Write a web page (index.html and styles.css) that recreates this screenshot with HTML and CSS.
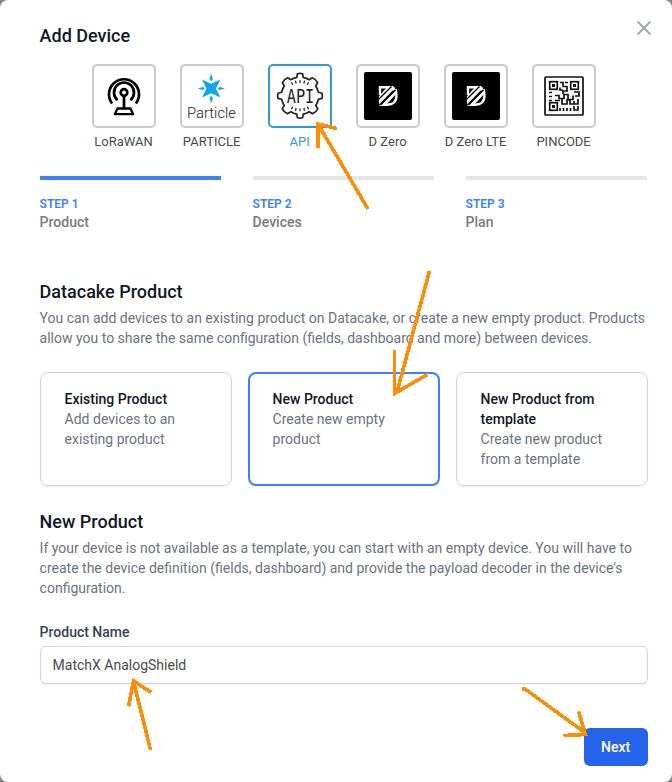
FILE: index.html
```
<!DOCTYPE html>
<html lang="en">
<head>
<meta charset="utf-8">
<title>Add Device</title>
<link rel="stylesheet" href="styles.css">
</head>
<body>
<main class="modal">
  <header class="modal-header">
    <h1>Add Device</h1>
    <button class="close" aria-label="Close"><svg width="24" height="24" viewBox="0 0 24 24"><path d="M5.500 5.500l13 13M18.500 5.500l-13 13" fill="none" stroke="#9ca3af" stroke-width="1.800"/></svg></button>
  </header>

  <nav class="types">
    <div class="type">
      <div class="tile"><svg viewBox="0 0 64 64" fill="none" stroke="#000" stroke-width="2.700">
        <path d="M20.200 39.500A15 15 0 1 1 43.800 39.500"/>
        <path d="M25.600 36.200A10 10 0 1 1 38.400 36.200"/>
        <circle cx="32" cy="28.500" r="3.300"/><path d="M32 32V44"/>
        <path d="M25.500 44.500h13l2.600 5.700H22.900z" stroke-linejoin="round" stroke-width="2.300"/>
      </svg></div><span>LoRaWAN</span>
    </div>
    <div class="type">
      <div class="tile"><svg viewBox="0 0 64 64">
        <g fill="#12a7e8"><path d="M22 15.500L31.200 19.800 40.400 15.500 36 24.500 40.400 33.400 31.200 29.300 22 33.400 26.400 24.500z"/>
        <path d="M31.200 9.500l1.700 5.500-1.700 2.500-1.700-2.500zM31.200 39.500l1.700-5.500-1.700-2.500-1.700 2.500zM17.500 24.500l5.500-1.500 1.800 1.500-1.800 1.500zM45 24.500l-5.500-1.500-1.800 1.500 1.800 1.500z"/></g>
        <text class="particle-word" x="7" y="53.500" textLength="49" lengthAdjust="spacingAndGlyphs">Particle</text>
      </svg></div><span>PARTICLE</span>
    </div>
    <div class="type selected">
      <div class="tile"><svg viewBox="0 0 64 64" fill="none" stroke="#222" stroke-width="1.700" stroke-linejoin="round">
        <path d="M28.800 13.300L29.400 9.800Q32 9 34.600 9.800L35.200 13.300Q38.500 14 41.200 15.700L44.300 13.800Q47.500 14.900 49.600 18.600L47.800 22Q49.700 25 50.300 28.200L54 29.200Q54.800 31.800 54 34.400L50.300 35.300Q49.600 38.700 47.800 41.500L49.800 44.700Q48.500 48 44.500 49.800L41.200 47.800Q38.500 49.500 35.200 50.200L34.600 53.700Q32 54.500 29.400 53.700L28.800 50.200Q25.500 49.500 22.800 47.800L19.500 49.800Q15.700 48.200 14.200 44.700L16.200 41.500Q14.400 38.700 13.700 35.300L10 34.400Q9.200 31.800 10 29.200L13.700 28.200Q14.300 25 16.200 22L14.400 18.600Q16.300 15.200 19.700 13.800L22.800 15.700Q25.500 14 28.800 13.300z"/>
        <path d="M23.500 18.200l1.200 2.600M27.500 16.700l.6 2.800M32 16.200v2.800M36.500 16.700l-.6 2.800M40.500 18.200l-1.200 2.600M23.500 45.300l1.200-2.600M27.500 46.800l.6-2.800M32 47.300v-2.800M36.500 46.800l-.6-2.800M40.500 45.300l-1.200-2.600" stroke-width="1.300"/>
        <text class="api-word" x="18.800" y="39" textLength="27.500" lengthAdjust="spacingAndGlyphs">API</text>
      </svg></div><span>API</span>
    </div>
    <div class="type">
      <div class="tile"><svg viewBox="0 0 64 64">
        <rect x="8" y="8" width="48" height="48" rx="2"/>
        <path d="M24 31V23.200H31Q40.500 23.500 40.500 32T31 40.800H25.500" fill="none" stroke="#fff" stroke-width="2.400"/>
        <path d="M22.800 32.500L32 22h5l2 2-16 16.500zM23 42l17.500-17.500 1 4L29 42z" fill="#fff"/>
        <path d="M21.500 36.500L35.500 22.500M24.500 41L39.500 26" stroke="#000" stroke-width="1.400"/>
      </svg></div><span>D Zero</span>
    </div>
    <div class="type">
      <div class="tile"><svg viewBox="0 0 64 64">
        <rect x="8" y="8" width="48" height="48" rx="2"/>
        <path d="M24 31V23.200H31Q40.500 23.500 40.500 32T31 40.800H25.500" fill="none" stroke="#fff" stroke-width="2.400"/>
        <path d="M22.800 32.500L32 22h5l2 2-16 16.500zM23 42l17.500-17.500 1 4L29 42z" fill="#fff"/>
        <path d="M21.500 36.500L35.500 22.500M24.500 41L39.500 26" stroke="#000" stroke-width="1.400"/>
      </svg></div><span>D Zero LTE</span>
    </div>
    <div class="type">
      <div class="tile"><svg viewBox="0 0 64 64" fill="none" stroke="#111" stroke-width="1.700">
        <rect x="13" y="13" width="38" height="38" rx=".8"/>
        <rect x="17.700" y="17.700" width="7.600" height="7.600"/><rect x="38.700" y="17.700" width="7.600" height="7.600"/><rect x="17.700" y="38.700" width="7.600" height="7.600"/>
        <path d="M20 21.500h3M41 21.500h3M20 42.500h3" stroke-width="3"/>
        <path d="M28 18.500h3v4h4M33 18.500h3M28 23.500v2.500h3M35 22v5h-4v3M17 28.500h3M17 32.500h3M17 36.500h3M42 28h5v4h-4M23 31.500h4v3h5v-4h4v5h5v-4M23 36.500h5M30 35v5h5v-4h3v4h4v-3M46 35v5h-5M42 42v4h4v-4M28 44v3M31.500 44v3M35 44v3M38.500 44v3"/>
      </svg></div><span>PINCODE</span>
    </div>
  </nav>

  <ol class="steps">
    <li class="active"><b>STEP 1</b><span>Product</span></li>
    <li><b>STEP 2</b><span>Devices</span></li>
    <li><b>STEP 3</b><span>Plan</span></li>
  </ol>

  <section class="product">
    <h2>Datacake Product</h2>
    <p>You can add devices to an existing product on Datacake, or create a new empty product. Products allow you to share the same configuration (fields, dashboard and more) between devices.</p>
    <div class="cards">
      <div class="card"><h3>Existing Product</h3><p>Add devices to an existing product</p></div>
      <div class="card chosen"><h3>New Product</h3><p>Create new empty product</p></div>
      <div class="card"><h3>New Product from template</h3><p>Create new product from a template</p></div>
    </div>
  </section>

  <section class="new-product">
    <h2>New Product</h2>
    <p>If your device is not available as a template, you can start with an empty device. You will have to create the device definition (fields, dashboard) and provide the payload decoder in the device's configuration.</p>
    <label for="name">Product Name</label>
    <input id="name" type="text" value="MatchX AnalogShield">
  </section>

  <footer><button class="next">Next</button></footer>

  <svg class="arrows" viewBox="0 0 672 782" aria-hidden="true">
    <path d="M368 209L318 124M337 128.500L318 124V148"/>
    <path d="M429.500 271L397 392M394.500 350V393.500L427.500 374.500"/>
    <path d="M150.500 750L133.500 681M151.500 692.500L133.500 681L128.500 706.500"/>
    <path d="M521.500 689H525L585.500 733M578.500 711.500L585.500 734.500L563.500 735.500"/>
  </svg>
</main>
</body>
</html>
```
FILE: styles.css
```
* { box-sizing: border-box; }
body {
  margin: 0;
  background: #7d8390;
  font-family: Roboto, "Liberation Sans", sans-serif;
  font-size: 14px;
  line-height: 20px;
  color: #6b7280;
}
h1, h2, h3, p, ol { margin: 0; padding: 0; }
h1, h2 { font-size: 18px; line-height: 28px; font-weight: 500; color: #111827; }
button { border: 0; font: inherit; }

.modal {
  position: relative;
  width: 672px;
  height: 782px;
  padding: 22px 24px 16px 39.6px;
  background: #fff;
  border-radius: 8px;
}
.modal-header { display: flex; justify-content: space-between; height: 42px; margin-right: -8px; }
.close { width: 24px; height: 24px; padding: 0; margin-top: -6px; background: none; }
.close svg { display: block; }

.types { display: flex; justify-content: center; gap: 24px; width: 608px; }
.type { display: flex; flex-direction: column; align-items: center; width: 64px; color: #4a4a4a; font-size: 13px; }
.type span { margin-top: 4px; white-space: nowrap; }
.tile { width: 64px; height: 64px; border: 2px solid #ccc; border-radius: 5px; }
.tile svg { display: block; width: 64px; height: 64px; margin: -2px; }
.selected { color: #3298dc; }
.selected .tile { border-color: #3298dc; }
.particle-word { font: 300 14.5px Roboto, sans-serif; fill: #222; }
.api-word { font: 19.5px "DejaVu Sans Mono", monospace; fill: #222; stroke: none; }

.steps { display: grid; grid-template-columns: repeat(3, 181px); gap: 32px; margin-top: 24px; list-style: none; }
.steps li { display: flex; flex-direction: column; padding-top: 16px; border-top: 4px solid #e5e7eb; }
.steps .active { border-color: #3b82f6; }
.steps b { font-size: 12px; line-height: 16px; font-weight: 600; color: #3b82f6; }
.steps span { font-weight: 500; color: #7a7a7a; }

section { width: 608px; }
section > p { margin-top: 2px; }
.product { margin-top: 46px; }
.cards { display: grid; grid-template-columns: repeat(3, 1fr); gap: 16px; margin-top: 24px; }
.card {
  height: 114px;
  padding: 16px 24px;
  border: 1px solid #d1d5db;
  border-radius: 8px;
  box-shadow: 0 1px 2px rgba(0, 0, 0, .05);
}
.card h3 { font-size: 14px; line-height: 20px; font-weight: 500; color: #111827; }
.chosen { padding: 15px 23px; border: 2px solid #3b82f6; }

.new-product { margin-top: 22px; }
.new-product label { display: block; margin-top: 24px; font-weight: 500; color: #374151; }
.new-product input {
  display: block;
  width: 100%;
  height: 38px;
  margin-top: 4px;
  padding: 8px 12px;
  border: 1px solid #d1d5db;
  border-radius: 6px;
  box-shadow: 0 1px 2px rgba(0, 0, 0, .05);
  font: inherit;
  color: #4a4a4a;
}
footer { display: flex; justify-content: flex-end; width: 608px; margin-top: 44px; }
.next { width: 64px; height: 38px; padding: 0; border-radius: 6px; background: #2563eb; color: #fff; font-weight: 500; }
.arrows {
  position: absolute;
  inset: 0;
  width: 672px;
  height: 782px;
  fill: none;
  stroke: #ff8c05;
  stroke-width: 3.6;
  shape-rendering: crispEdges;
  pointer-events: none;
}
```
